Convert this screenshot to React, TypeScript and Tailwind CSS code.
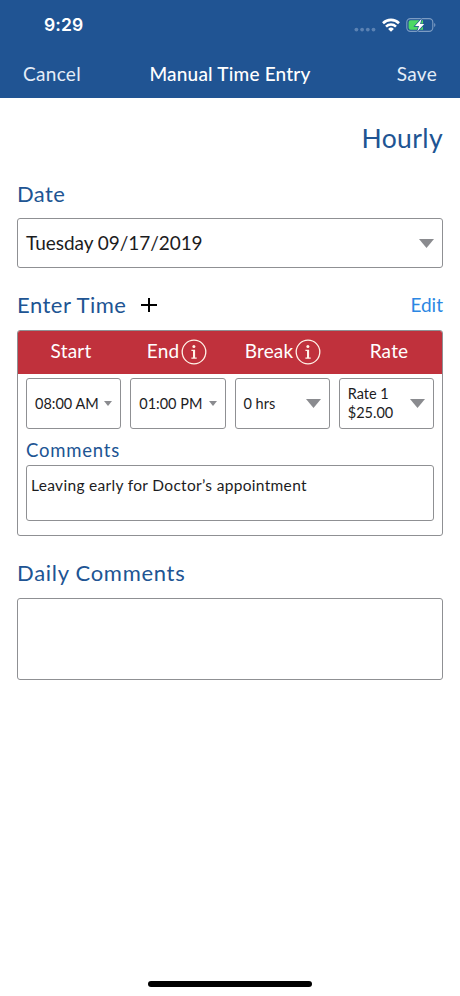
import { useState } from 'react';

const cells = [
  { title: 'Start', info: false, lines: ['08:00 AM'], small: true },
  { title: 'End', info: true, lines: ['01:00 PM'], small: true },
  { title: 'Break', info: true, lines: ['0 hrs'], small: false },
  { title: 'Rate', info: false, lines: ['Rate 1', '$25.00'], small: false },
];

function Caret({ className }: { className: string }) {
  return (
    <svg viewBox="0 0 16 10" preserveAspectRatio="none" className={`shrink-0 fill-[#8a8b8f] ${className}`}>
      <path d="M0 0h16L8 10z" />
    </svg>
  );
}

function InfoIcon() {
  return (
    <svg viewBox="0 0 26 26" className="h-[26px] w-[26px] shrink-0 text-[#fff3e8]" fill="none">
      <circle cx="13" cy="13" r="11.8" stroke="currentColor" strokeWidth="1.3" />
      <circle cx="12.9" cy="7.6" r="1.5" fill="currentColor" />
      <path d="M10.4 10.8h3.7v7.8h1.6v1.1h-5.3v-1.1H12v-6.7h-1.6z" fill="currentColor" />
    </svg>
  );
}

function StatusBar() {
  return (
    <div className="flex h-[50px] items-center justify-between pl-[44px] pr-[24px]">
      <span className="font-[Inter] text-[17.5px] leading-[50px] font-semibold tracking-[0.1px]">9:29</span>
      <div className="flex items-center">
        <svg viewBox="0 0 22 16" className="h-4 w-[22px] fill-[#5b82b3]">
          <circle cx="2.4" cy="12.6" r="1.9" />
          <circle cx="8.1" cy="12.6" r="1.9" />
          <circle cx="13.8" cy="12.6" r="1.9" />
          <circle cx="19.5" cy="12.6" r="1.9" />
        </svg>
        <svg viewBox="0 0 18 14" className="ml-[6px] h-[14px] w-[18px]" fill="none" stroke="white" strokeWidth="2.6">
          <path d="M1 5.2a11.4 11.4 0 0 1 16 0" />
          <path d="M4 8.6a7.1 7.1 0 0 1 10 0" />
          <path d="M9 13.7 6.1 10.9a4.2 4.2 0 0 1 5.8 0z" fill="white" stroke="none" />
        </svg>
        <svg viewBox="0 0 30 16" className="ml-[6px] h-4 w-[30px]" fill="none">
          <rect x="0.8" y="1.6" width="26" height="12.8" rx="3.6" stroke="#7c9cc3" strokeWidth="1.1" />
          <path d="M28.2 6v4c1.6-.6 1.6-3.4 0-4z" fill="#7c9cc3" />
          <path d="M4.6 3.2H17v9.6H4.6a2 2 0 0 1-2-2V5.2a2 2 0 0 1 2-2z" fill="#4cd964" />
          <path
            d="M15.6 1.8 9 9h4l-1.7 5.4 6.9-7.3h-4.1z"
            fill="white"
            stroke="#205493"
            strokeWidth="1.4"
            style={{ paintOrder: 'stroke' }}
          />
        </svg>
      </div>
    </div>
  );
}

export default function App() {
  const [comment, setComment] = useState('Leaving early for Doctor’s appointment');
  const [dailyComment, setDailyComment] = useState('');

  return (
    <div className="flex h-[996px] w-[460px] flex-col overflow-hidden bg-white font-['Lato',sans-serif] text-[#1c1c1e]">
      <header className="h-[98px] shrink-0 bg-[#205493] text-white">
        <StatusBar />
        <nav className="flex h-12 items-center justify-between pl-[23px] pr-[23px]">
          <button className="w-[70px] text-left text-[19px] tracking-[0.3px] text-[#e4edf7]">Cancel</button>
          <h1 className="text-[19px] font-medium tracking-[0.2px]">Manual Time Entry</h1>
          <button className="w-[70px] text-right text-[19px] tracking-[0.3px] text-[#e4edf7]">Save</button>
        </nav>
      </header>

      <main className="flex flex-col px-[17px] text-[#205493]">
        <div className="mt-[20px] h-10 text-right text-[26.5px] leading-10 tracking-[0.4px]">Hourly</div>

        <h2 className="mt-[21px] h-[30px] text-[22px] leading-[30px] tracking-[0.4px]">Date</h2>
        <button className="mt-[9px] flex h-[50px] items-center justify-between rounded-[3px] border border-[#8f9093] pr-[8px] pl-[8px] text-[19px] tracking-[-0.05px] text-[#1c1c1e]">
          Tuesday 09/17/2019
          <Caret className="h-[9px] w-[15px]" />
        </button>

        <div className="mt-[22px] flex h-[30px] items-center">
          <h2 className="text-[22px] leading-[30px] tracking-[0.5px]">Enter Time</h2>
          <svg viewBox="0 0 16 16" className="ml-[15px] h-4 w-4" stroke="black" strokeWidth="2">
            <path d="M8 1v14M0 8h16" />
          </svg>
          <button className="ml-auto text-[19px] leading-[30px] text-[#2b87e3]">Edit</button>
        </div>

        <section className="mt-[10px] h-[206px] overflow-hidden rounded-[3px] border border-[#8f9093]">
          <div className="grid h-[43px] grid-cols-4 bg-[#c0313c] pb-[2px] text-[19px] tracking-[0.2px] text-white">
            {cells.map(({ title, info }) => (
              <div key={title} className="flex items-center justify-center gap-[2px]">
                {title}
                {info && <InfoIcon />}
              </div>
            ))}
          </div>
          <div className="mt-[4px] grid grid-cols-4 gap-[9px] px-[8px]">
            {cells.map(({ title, lines, small }) => (
              <button
                key={title}
                className="flex h-[51px] items-center justify-between rounded-[3px] border border-[#8f9093] pr-[8px] pb-px pl-[8px] text-left text-[14.5px] leading-[19px] whitespace-nowrap text-[#1c1c1e]"
              >
                <span>
                  {lines.map((line) => (
                    <span key={line} className="block">{line}</span>
                  ))}
                </span>
                <Caret className={small ? 'h-[5px] w-[8px]' : 'h-[9px] w-[15px]'} />
              </button>
            ))}
          </div>
          <h3 className="mt-[8px] ml-[8px] h-[26px] text-[18.5px] leading-[26px] tracking-[0.8px]">Comments</h3>
          <textarea
            value={comment}
            onChange={(e) => setComment(e.target.value)}
            className="mx-[8px] mt-[2px] block h-[56px] w-[408px] resize-none rounded-[3px] border border-[#8f9093] px-[4px] pt-[9px] text-[15.5px] leading-[21px] tracking-[0.32px] text-[#1c1c1e] outline-none"
          />
        </section>

        <h2 className="mt-[22px] h-[30px] text-[22px] leading-[30px] tracking-[0.7px]">Daily Comments</h2>
        <textarea
          value={dailyComment}
          onChange={(e) => setDailyComment(e.target.value)}
          className="mt-[10px] h-[82px] resize-none rounded-[3px] border border-[#8f9093] p-2 outline-none"
        />
      </main>

      <div className="mx-auto mt-auto mb-[9px] h-[6px] w-[164px] rounded-full bg-black" />
    </div>
  );
}
